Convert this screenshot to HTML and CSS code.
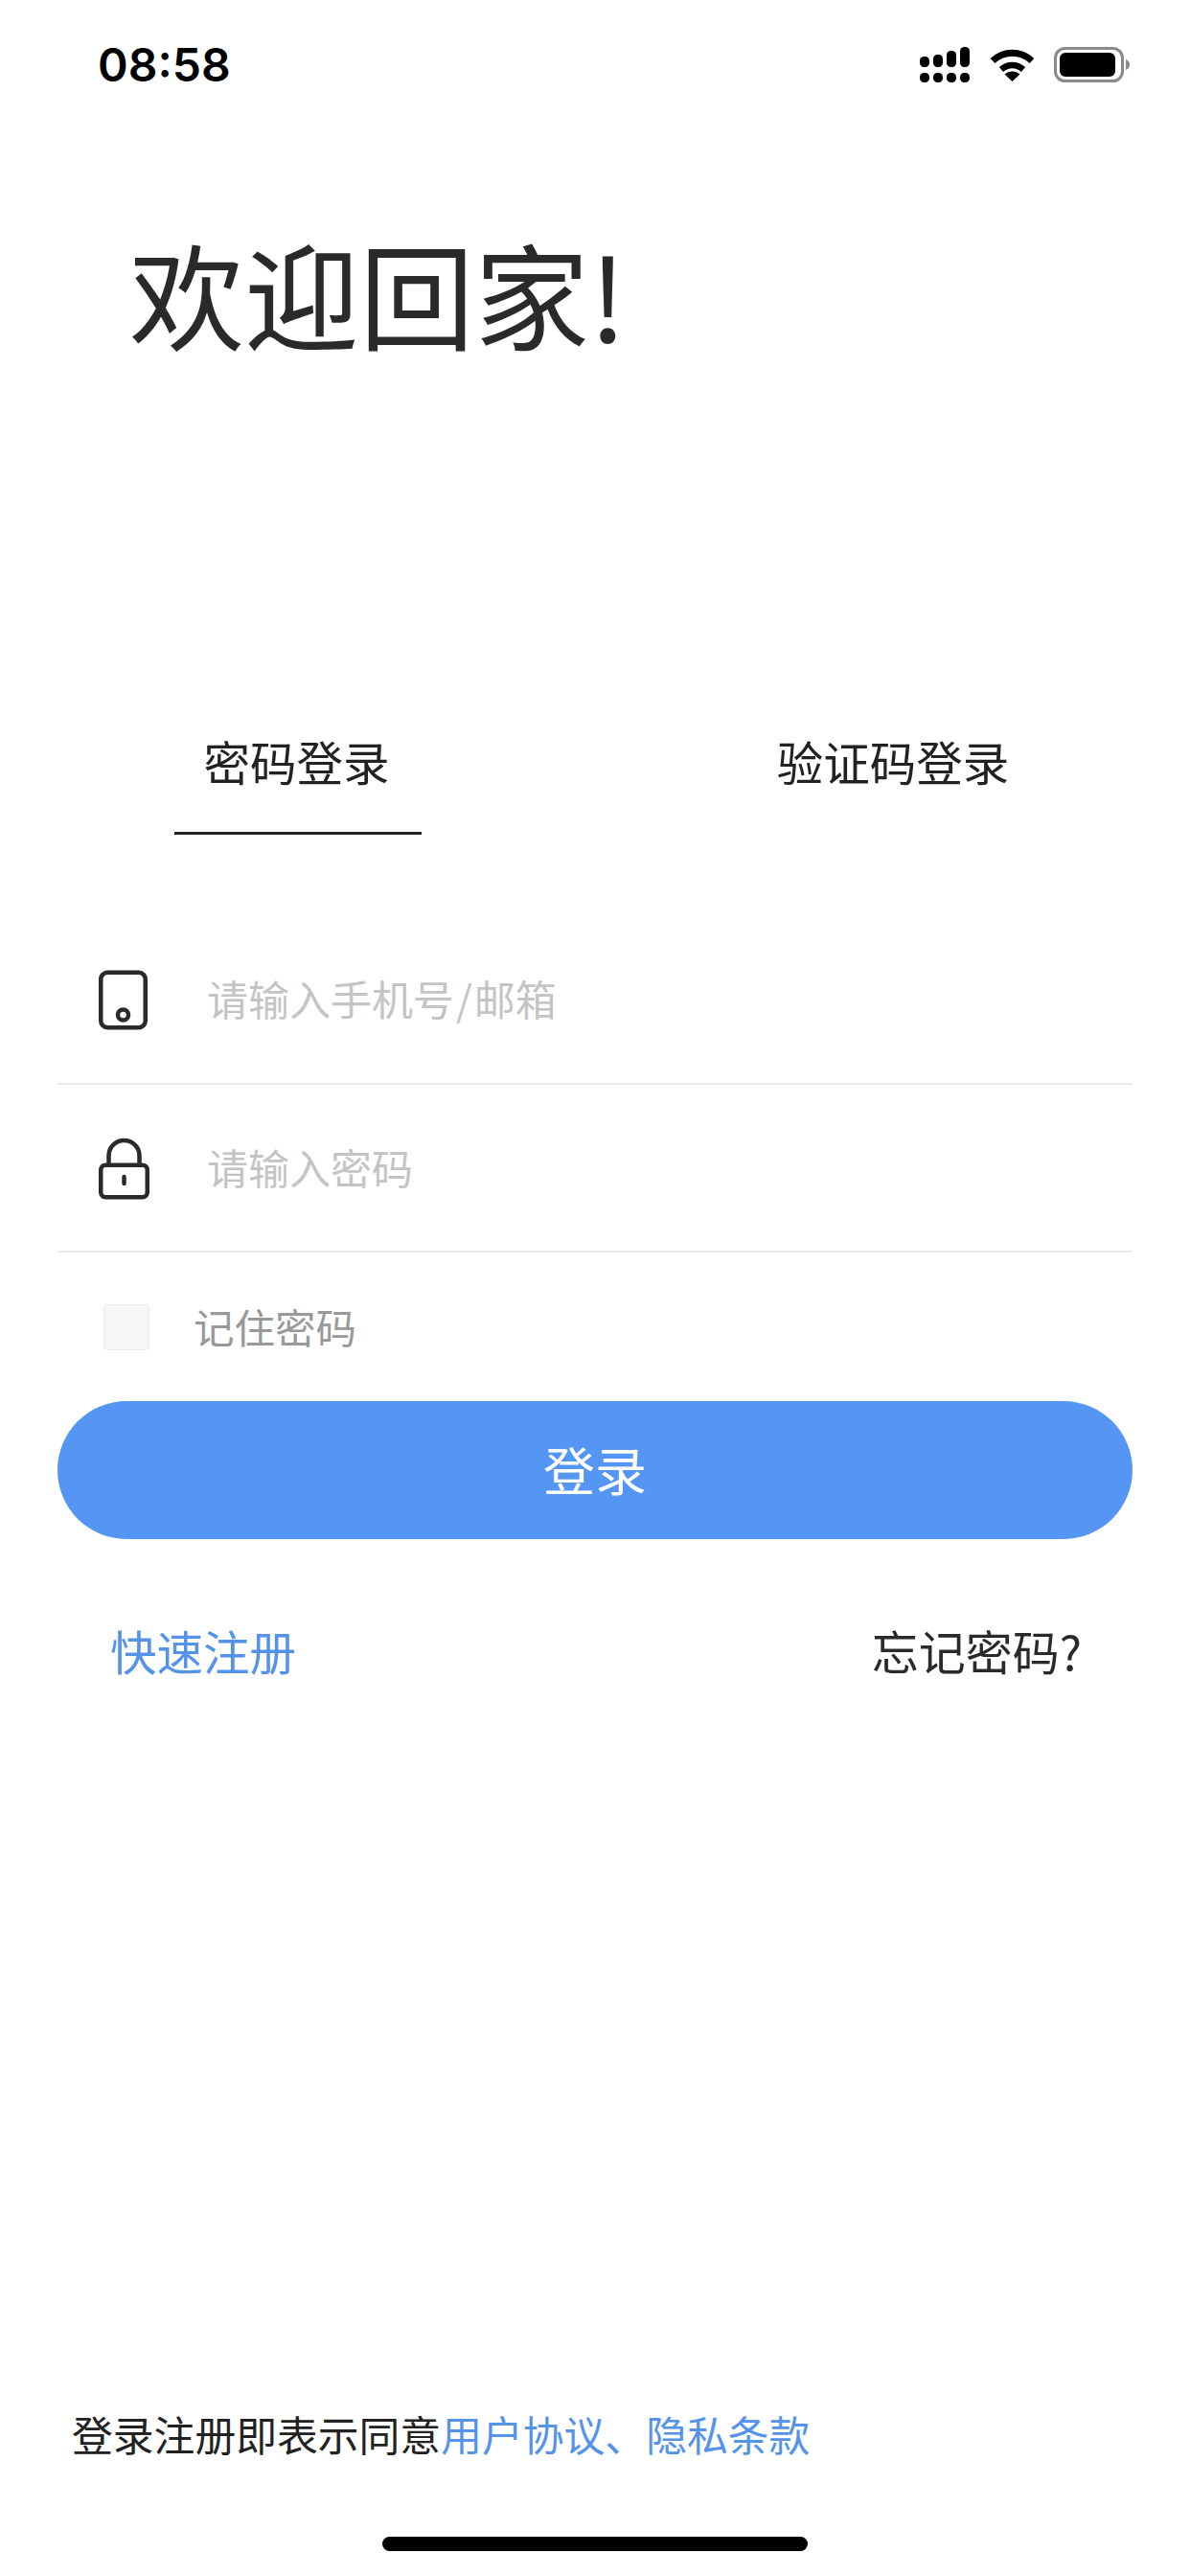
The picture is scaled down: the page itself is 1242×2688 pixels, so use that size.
FILE: index.html
```html
<!DOCTYPE html>
<html lang="zh-CN">

<head>
    <meta charset="UTF-8">
    <meta name="viewport" content="width=device-width, initial-scale=1.0">
    <title>登录</title>
    <link rel="stylesheet" href="styles.css">
</head>

<body>
    <div class="page">
        <div class="status-bar">
            <span class="time">08:58</span>
            <div class="status-icons">
                <svg class="signal" width="52" height="37" viewBox="0 0 52 37" fill="#000">
                    <rect x="0" y="10" width="10" height="11" rx="4.5" />
                    <rect x="14" y="8" width="10" height="13" rx="4.5" />
                    <rect x="28" y="4" width="10" height="17" rx="4.5" />
                    <rect x="42" y="0" width="10" height="21" rx="4.5" />
                    <rect x="0" y="27" width="10" height="10" rx="4.5" />
                    <rect x="14" y="27" width="10" height="10" rx="4.5" />
                    <rect x="28" y="27" width="10" height="10" rx="4.5" />
                    <rect x="42" y="27" width="10" height="10" rx="4.5" />
                </svg>
                <svg class="wifi" width="47" height="36" viewBox="0 0 47 36" fill="none" stroke="#000">
                    <path d="M3 14.5C15 3.500 32 3.500 44 14.500" stroke-width="7" />
                    <path d="M12 23.500C19 17.500 28 17.500 35 23.500" stroke-width="6.500" />
                    <path d="M15.500 28.500C20 24.500 27 24.500 31.500 28.500L23.500 36Z" fill="#000" stroke="none" />
                </svg>
                <svg class="battery" width="79" height="37" viewBox="0 0 79 37">
                    <rect x="1.500" y="1.500" width="70" height="34" rx="10" fill="none" stroke="#8a8a8a" stroke-width="3" />
                    <rect x="6" y="6" width="58" height="25" rx="6" fill="#000" />
                    <path d="M75 13C78 14 79 16 79 18.500C79 21 78 23 75 24Z" fill="#8a8a8a" />
                </svg>
            </div>
        </div>

        <h1 class="title">欢迎回家!</h1>

        <div class="tabs">
            <div class="tab active">密码登录</div>
            <div class="tab">验证码登录</div>
        </div>

        <div class="field">
            <svg class="field-icon" width="56" height="66" viewBox="0 0 56 66" fill="none" stroke="#2a2a2a" stroke-width="4.500">
                <rect x="4.250" y="4.750" width="46.500" height="57.500" rx="7" />
                <circle cx="27.500" cy="49" r="5.500" />
            </svg>
            <span class="placeholder">请输入手机号<span class="slash">/</span>邮箱</span>
        </div>
        <div class="field">
            <svg class="field-icon" width="56" height="66" viewBox="0 0 56 66" fill="none" stroke="#2a2a2a" stroke-width="4.500">
                <path d="M12.500 30V20A16 16 0 0 1 44.500 20V30" />
                <rect x="4.250" y="29.750" width="48.500" height="33.500" rx="5" />
                <path d="M28.500 42V49" stroke-linecap="round" />
            </svg>
            <span class="placeholder">请输入密码</span>
        </div>

        <div class="remember">
            <span class="checkbox"></span>
            <span class="remember-text">记住密码</span>
        </div>

        <button class="login-btn" type="button">登录</button>

        <div class="links">
            <a class="link-blue">快速注册</a>
            <a class="link-dark">忘记密码?</a>
        </div>

        <div class="agreement">登录注册即表示同意<span class="agree-link">用户协议、隐私条款</span></div>
        <div class="home-bar"></div>
    </div>
</body>

</html>
```

FILE: styles.css
```css
body {
    font-family: "Noto Sans CJK SC", "Noto Sans", sans-serif;
    background-color: #fff;
    margin: 0;
    padding: 0;
}

.page {
    width: 1242px;
    height: 2688px;
    box-sizing: border-box;
    padding: 0 60px;
    display: flex;
    flex-direction: column;
    overflow: hidden;
    color: #2a2a2a;
}

.status-bar {
    height: 70px;
    margin: 30px 0 0;
    padding: 0 0 0 42px;
    display: flex;
    align-items: flex-start;
    justify-content: space-between;
}

.time {
    font-family: Inter, sans-serif;
    font-weight: 600;
    font-size: 48px;
    line-height: 76px;
    color: #000;
}

.status-icons {
    display: flex;
    align-items: flex-start;
    margin: 19px 3px 0 0;
}

.wifi {
    margin-left: 21px;
}

.battery {
    margin-left: 20px;
}

.title {
    margin: 135px 0 0 75px;
    font-size: 120px;
    line-height: 140px;
    font-weight: 400;
    color: #2a2a2a;
}

.tabs {
    margin-top: 383px;
    display: flex;
    font-size: 48.500px;
    color: #222;
}

.tab {
    width: 258px;
    height: 113px;
    margin-left: 122px;
    padding-right: 3px;
    line-height: 72px;
    text-align: center;
    white-space: nowrap;
    box-sizing: border-box;
}

.tab + .tab {
    margin-left: 357px;
    width: 270px;
    padding-right: 0;
}

.tab.active {
    border-bottom: 3px solid #222;
}

.field {
    height: 175px;
    box-sizing: border-box;
    display: flex;
    align-items: center;
    padding-left: 41px;
    border-bottom: 2px solid #eaeaea;
}

.tabs + .field {
    margin-top: 84px;
    height: 177px;
}

.field-icon {
    flex: none;
}

.placeholder {
    margin-left: 59px;
    margin-bottom: 3px;
    font-size: 43px;
    color: #c4c4c4;
}

.slash {
    margin: 0 2px;
}

.remember {
    height: 155px;
    display: flex;
    align-items: center;
    padding-left: 48px;
    box-sizing: border-box;
}

.checkbox {
    width: 48px;
    height: 48px;
    box-sizing: border-box;
    background-color: #f6f6f6;
    border: 1px solid #ececec;
    border-radius: 4px;
}

.remember-text {
    margin-left: 46px;
    margin-bottom: 3px;
    font-size: 42.500px;
    color: #999;
}

.login-btn {
    display: block;
    width: 100%;
    height: 144px;
    margin-top: 0;
    border: none;
    border-radius: 72px;
    background-color: #5596f4;
    color: #fff;
    font-family: inherit;
    font-size: 54px;
    padding: 0 0 3px;
}

.links {
    margin-top: 74px;
    padding: 0 53px 0 55px;
    display: flex;
    justify-content: space-between;
    font-size: 48.500px;
    line-height: 84px;
}

.link-blue {
    color: #5593ea;
}

.link-dark {
    font-size: 49px;
    color: #2a2a2a;
}

.agreement {
    margin-top: auto;
    padding-left: 15px;
    font-size: 42.800px;
    line-height: 60px;
    color: #222;
}

.agree-link {
    color: #5593ea;
}

.home-bar {
    width: 444px;
    height: 15px;
    margin: 78px auto 26px;
    border-radius: 8px;
    background-color: #000;
}
```
